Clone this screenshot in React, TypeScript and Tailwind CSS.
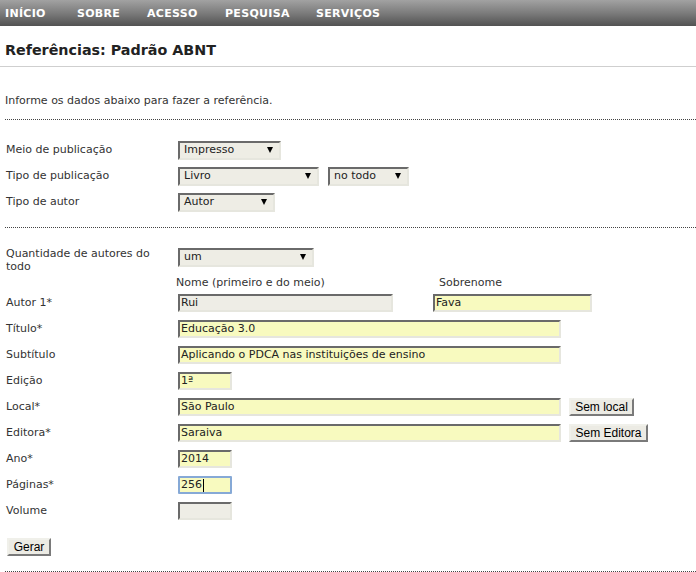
const NAV: [string, string][] = [
  ["INÍCIO", "w-[72px]"],
  ["SOBRE", "w-[70px]"],
  ["ACESSO", "w-[78px]"],
  ["PESQUISA", "w-[91px]"],
  ["SERVIÇOS", ""],
];

const inputBase =
  "h-[18px] border-2 border-t-[#6a6a6a] border-l-[#6a6a6a] border-b-[#e6e6de] border-r-[#e6e6de] pl-px text-[11px] leading-[14px] text-[#222] flex items-center";

function Input({ value, width, grey }: { value?: string; width: string; grey?: boolean }) {
  return (
    <div className={`${inputBase} ${width} ${grey ? "bg-[#eeede6]" : "bg-[#f8fabf]"}`}>
      {value}
    </div>
  );
}

function Select({ value, width }: { value: string; width: string }) {
  return (
    <div
      className={`h-[19px] ${width} bg-[#eeede5] border-2 border-t-[#6a6a6a] border-l-[#6a6a6a] border-b-[#e6e6de] border-r-[#e6e6de] flex items-center justify-between pl-[4px] pr-[6px] text-[11px] text-[#222]`}
    >
      <span>{value}</span>
      <svg width="6" height="6" viewBox="0 0 6 6" className="mb-px">
        <polygon points="0,0 6,0 3,6" fill="#000" />
      </svg>
    </div>
  );
}

function Btn({ label, width }: { label: string; width: string }) {
  return (
    <div
      className={`h-[18px] ${width} bg-[#ecebe4] border-2 border-t-[#f0f0ea] border-l-[#f0f0ea] border-b-[#7a7a7a] border-r-[#7a7a7a] flex items-center justify-center text-[12px] text-black`}
      style={{ fontFamily: '"Liberation Sans", Arial, sans-serif' }}
    >
      {label}
    </div>
  );
}

function Row({ label, children }: { label: string; children: React.ReactNode }) {
  return (
    <div className="h-[26px] flex items-center">
      <div className="w-[173px] pl-px">{label}</div>
      {children}
    </div>
  );
}

export default function App() {
  return (
    <div
      className="min-h-[572px] bg-white text-[11px] text-[#333]"
      style={{ fontFamily: '"DejaVu Sans", Verdana, sans-serif' }}
    >
      <div className="h-[26px] flex items-center pl-[5px] bg-gradient-to-b from-[#a2a2a2] via-[#7c7c7c] to-[#525252]">
        {NAV.map(([n, w]) => (
          <span key={n} className={`${w} text-white font-bold text-[11px] leading-none tracking-[0.3px]`}>
            {n}
          </span>
        ))}
      </div>

      <div className="pt-[14px] pb-[6px] border-b border-[#cfcfcf]">
        <h1 className="pl-[5px] text-[14.3px] leading-[20px] font-bold text-[#222]">
          Referências: Padrão ABNT
        </h1>
      </div>

      <div className="ml-[5px]">
        <div className="mt-[27px] pb-[11px] leading-[14px] border-b border-dotted border-[#444]">
          Informe os dados abaixo para fazer a referência.
        </div>

        <div className="pt-[17px] pb-[12px] border-b border-dotted border-[#444]">
          <Row label="Meio de publicação">
            <Select value="Impresso" width="w-[103px]" />
          </Row>
          <Row label="Tipo de publicação">
            <Select value="Livro" width="w-[141px]" />
            <div className="ml-[9px]">
              <Select value="no todo" width="w-[81px]" />
            </div>
          </Row>
          <Row label="Tipo de autor">
            <Select value="Autor" width="w-[97px]" />
          </Row>
        </div>

        <div className="pt-[18px] flex items-start h-[47px]">
          <div className="w-[173px] pl-px pt-px leading-[13px]">
            Quantidade de autores do
            <br />
            todo
          </div>
          <div className="mt-[2px]">
            <Select value="um" width="w-[136px]" />
          </div>
        </div>
        <div className="mt-px h-[14px] leading-[14px] flex ml-[171px]">
          <span className="w-[263px]">Nome (primeiro e do meio)</span>
          <span>Sobrenome</span>
        </div>

        <Row label="Autor 1*">
          <Input value="Rui" width="w-[215px]" grey />
          <div className="ml-[40px]">
            <Input value="Fava" width="w-[159px]" />
          </div>
        </Row>
        <Row label="Título*">
          <Input value="Educação 3.0" width="w-[383px]" />
        </Row>
        <Row label="Subtítulo">
          <Input value="Aplicando o PDCA nas instituições de ensino" width="w-[383px]" />
        </Row>
        <Row label="Edição">
          <Input value="1ª" width="w-[54px]" />
        </Row>
        <Row label="Local*">
          <Input value="São Paulo" width="w-[383px]" />
          <div className="ml-[8px]">
            <Btn label="Sem local" width="w-[65px]" />
          </div>
        </Row>
        <Row label="Editora*">
          <Input value="Saraiva" width="w-[383px]" />
          <div className="ml-[8px]">
            <Btn label="Sem Editora" width="w-[79px]" />
          </div>
        </Row>
        <Row label="Ano*">
          <Input value="2014" width="w-[54px]" />
        </Row>
        <Row label="Páginas*">
          <div className="h-[18px] w-[54px] bg-[#f8fabf] border-2 border-[#86a9d6] rounded-[1px] flex items-center pl-px text-[11px] text-[#222]">
            256
            <span className="ml-px h-[13px] w-px bg-black" />
          </div>
        </Row>
        <Row label="Volume">
          <Input width="w-[54px]" grey />
        </Row>

        <div className="pt-[14px] pb-[15px] pl-[2px] border-b border-dotted border-[#444]">
          <Btn label="Gerar" width="w-[44px]" />
        </div>
      </div>
    </div>
  );
}
